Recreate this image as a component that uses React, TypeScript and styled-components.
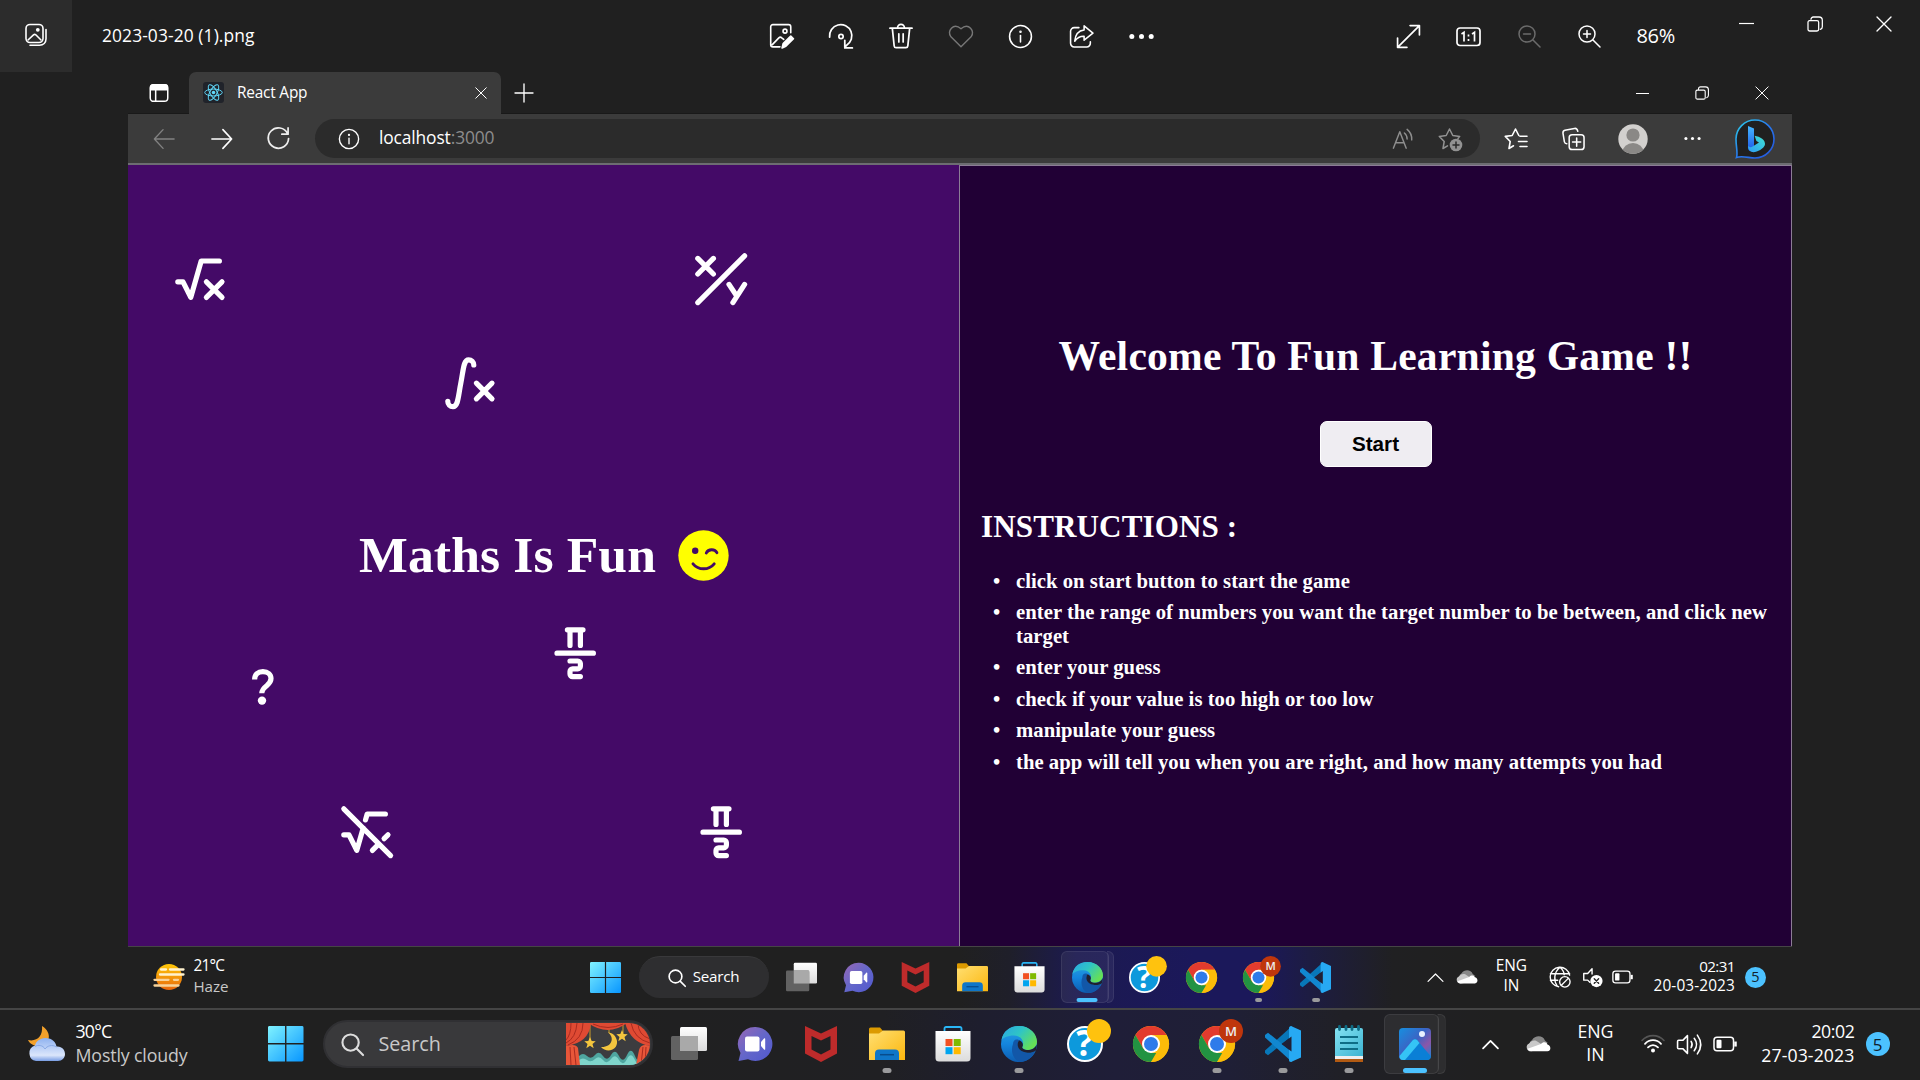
import React from "react";
import styled, { createGlobalStyle, css } from "styled-components";

const Global = createGlobalStyle`
  * { box-sizing: border-box; }
  html, body { margin: 0; padding: 0; background: #202020; }
  body { width: 1920px; height: 1080px; overflow: hidden; }
  svg { display: block; flex: none; overflow: visible; }
`;

const ui = `"Open Sans", "Noto Sans", sans-serif`;
const serif = `"Liberation Serif", "Times New Roman", serif`;

const Screen = styled.div`
  width: 1920px;
  height: 1080px;
  display: flex;
  flex-direction: column;
  background: #202020;
  color: #fff;
  font-family: ${ui};
`;

const Text = styled.span<{ $size: number; $track?: number; $color?: string }>`
  font-size: ${(p) => p.$size}px;
  letter-spacing: ${(p) => p.$track ?? 0}px;
  color: ${(p) => p.$color ?? "#fff"};
  line-height: 1;
  white-space: nowrap;
`;

const Slot = styled.div<{ $w: number; $before?: number }>`
  width: ${(p) => p.$w}px;
  margin-left: ${(p) => p.$before ?? 0}px;
  flex: none;
  display: flex;
  align-items: center;
  justify-content: center;
`;

/* ---------- photo viewer header ---------- */

const ViewerHeader = styled.header`
  height: 72px;
  flex: none;
  display: flex;
`;
const GalleryButton = styled.div`
  width: 72px;
  height: 72px;
  display: flex;
  align-items: center;
  justify-content: center;
  padding-bottom: 2px;
  background: #2c2c2c;
`;
const FileName = styled.div`
  width: 678px;
  padding-left: 30px;
  display: flex;
  align-items: center;
`;
const ViewerTools = styled.div<{ $pad: number }>`
  display: flex;
  align-items: center;
  padding-left: ${(p) => p.$pad}px;
`;
const WindowButtons = styled.div<{ $h: number; $before: number }>`
  display: flex;
  align-items: center;
  height: ${(p) => p.$h}px;
  margin-left: ${(p) => p.$before}px;
`;

/* ---------- photographed desktop ---------- */

const Photo = styled.main`
  width: 1664px;
  height: 936px;
  flex: none;
  margin-left: 128px;
  display: flex;
  flex-direction: column;
`;
const TabStrip = styled.div`
  height: 42px;
  flex: none;
  display: flex;
  align-items: center;
  box-shadow: inset 0 -1px #191919;
`;
const Tab = styled.div`
  width: 312px;
  height: 42px;
  padding: 0 14px 1px;
  display: flex;
  align-items: center;
  gap: 13px;
  background: #3b3b3b;
  border-radius: 7px 7px 0 0;
  > :last-child { margin-left: auto; }
`;
const Favicon = styled.div`
  width: 21px;
  height: 21px;
  border-radius: 3px;
  background: #20232a;
`;
const Toolbar = styled.div`
  height: 51px;
  flex: none;
  display: flex;
  align-items: center;
  padding-left: 7px;
  background: #3b3b3b;
  border-bottom: 2px solid #6d6d72;
`;
const AddressBar = styled.div`
  width: 1165px;
  height: 39px;
  margin-left: 8px;
  padding-left: 23px;
  border-radius: 20px;
  display: flex;
  align-items: center;
  background: #2b2b2b;
`;
const Url = styled.div`
  width: 1000px;
  margin-left: 19px;
  padding-bottom: 1px;
`;

const AppPage = styled.div`
  height: 781px;
  flex: none;
  display: grid;
  grid-template-columns: 831px 833px;
`;
const Playground = styled.section`
  position: relative;
  background: #440a67;
`;
const Floating = styled.div<{ $x: number; $y: number }>`
  position: absolute;
  left: ${(p) => p.$x}px;
  top: ${(p) => p.$y}px;
`;
const MathsTitle = styled.h1`
  margin: 0;
  padding: 360px 0 0 231px;
  display: flex;
  align-items: center;
  gap: 21.5px;
  font: bold 51.7px/60px ${serif};
  letter-spacing: 0.1px;
  white-space: nowrap;
`;
const Panel = styled.section`
  display: flex;
  flex-direction: column;
  align-items: center;
  background: #210035;
  border: 1px solid #8c7c96;
  border-bottom: 0;
  font-family: ${serif};
  font-weight: bold;
`;
const Welcome = styled.h1`
  margin: 165px 0 0;
  font-size: 41.6px;
  line-height: 50px;
  letter-spacing: 0.22px;
  white-space: nowrap;
`;
const StartButton = styled.button`
  width: 112px;
  height: 46px;
  margin-top: 40px;
  padding: 0 0 1px;
  border: 1px solid #fff;
  border-radius: 7px;
  background: #efedf2;
  color: #000;
  font: bold 20.7px "Liberation Sans", Arial, sans-serif;
`;
const Instructions = styled.h2`
  align-self: flex-start;
  margin: 40px 0 0 21px;
  font-size: 31.1px;
  line-height: 40px;
  letter-spacing: 0.1px;
`;
const Steps = styled.ul`
  align-self: stretch;
  margin: 22.5px 0 0;
  padding: 0 14px 0 56px;
  list-style: none;
  font-size: 20.7px;
  line-height: 23.6px;
  letter-spacing: 0.03px;
`;
const Step = styled.li`
  margin-bottom: 8px;
  &::before {
    content: "•";
    display: inline-block;
    width: 23px;
    margin-left: -23px;
  }
`;

/* ---------- taskbars ---------- */

const InnerBar = styled.div`
  height: 62px;
  flex: none;
  display: flex;
  align-items: center;
  padding-bottom: 1px;
  border-top: 1px solid #454545;
  background: linear-gradient(90deg, #202020 50%, #1f1f2a 53%, #1c1a50 57%, #1b185a 64%, #1b185a 68%, #1d1c42 71%, #202022 76%, #202020 80%);
`;
const OuterBar = styled.footer`
  height: 72px;
  flex: none;
  display: flex;
  align-items: center;
  padding-bottom: 2px;
  border-top: 2px solid #454545;
  background: linear-gradient(90deg, #202020 30%, #202023 46%, #1e1e2e 51%, #1f1e38 58%, #1f1f36 64%, #202026 70%, #202020 78%);
`;
const Weather = styled.div<{ $w: number; $pad: number; $gap: number }>`
  width: ${(p) => p.$w}px;
  padding-left: ${(p) => p.$pad}px;
  flex: none;
  display: flex;
  align-items: center;
  gap: ${(p) => p.$gap}px;
`;
const Lines = styled.div<{ $pitch: number; $w?: number; $align?: string }>`
  flex: none;
  display: flex;
  flex-direction: column;
  margin-bottom: 2px;
  width: ${(p) => (p.$w ? `${p.$w}px` : "auto")};
  align-items: ${(p) => p.$align ?? "flex-start"};
  > span { line-height: ${(p) => p.$pitch}px; }
`;
const InnerSearch = styled.div`
  width: 130px;
  height: 42px;
  flex: none;
  margin: 0 4px;
  border-radius: 21px;
  display: flex;
  align-items: center;
  justify-content: center;
  gap: 7px;
  background: #2e2e30;
  border-top: 1px solid #39393b;
  > span { margin-top: -2px; }
`;
const OuterSearch = styled.div`
  width: 330px;
  height: 48px;
  flex: none;
  margin: 0 3px 0 4px;
  padding: 0 1px 0 16px;
  border-radius: 24px;
  display: flex;
  align-items: center;
  gap: 15px;
  background: #39393b;
  border: 2px solid #303033;
  > :last-child { margin-left: auto; }
`;
const Stage = styled.div`
  width: 84px;
  height: 42px;
  overflow: hidden;
  border-radius: 0 21px 21px 0;
`;
const AppSlot = styled.div<{ $w: number; $h: number; $active?: boolean }>`
  position: relative;
  width: ${(p) => p.$w}px;
  height: ${(p) => p.$h}px;
  flex: none;
  display: flex;
  align-items: center;
  justify-content: center;
  ${(p) =>
    p.$active &&
    css`
      &::before, &::after {
        content: "";
        position: absolute;
        top: 0;
        bottom: 0;
        left: ${p.$w * 0.045}px;
        width: ${p.$w * 0.8}px;
        border-radius: 6px;
        background: rgba(255, 255, 255, 0.06);
        border: 1px solid rgba(255, 255, 255, 0.08);
      }
      &::after {
        left: ${p.$w * 0.6}px;
        width: ${p.$w * 0.34}px;
        clip-path: inset(0 0 0 ${p.$w * 0.25}px);
      }
    `}
  > svg { position: relative; }
`;
const Indicator = styled.i<{ $wide?: boolean; $scale: number }>`
  position: absolute;
  z-index: 1;
  bottom: 1px;
  left: 50%;
  width: ${(p) => (p.$wide ? 24 : 9) * p.$scale}px;
  height: ${(p) => 5 * p.$scale}px;
  border-radius: 3px;
  transform: translateX(-50%);
  background: ${(p) => (p.$wide ? "#4cc2ff" : "#9a9a9c")};
`;
const Count = styled.div<{ $d: number; $before: number }>`
  width: ${(p) => p.$d}px;
  height: ${(p) => p.$d}px;
  margin-left: ${(p) => p.$before}px;
  flex: none;
  border-radius: 50%;
  display: flex;
  align-items: center;
  justify-content: center;
  background: #4cc2ff;
`;

/* ---------- drawings ---------- */

type LineProps = { size: number; d?: string; color?: string; w?: number; children?: React.ReactNode; cap?: "round" | "butt" };
const Line = ({ size, d, color = "#fff", w = 1.6, children, cap = "round" }: LineProps) => (
  <svg width={size} height={size} viewBox="0 0 24 24" fill="none" stroke={color} strokeWidth={w} strokeLinecap={cap} strokeLinejoin="round">
    {d && <path d={d} />}
    {children}
  </svg>
);

const math = {
  root: "M19 5h-7l-4 14l-3-6h-2M14 13l6 6M14 19l6-6",
  rootOff: "M14 19l2.5-2.5M18.5 14.5l1.5-1.5M19 5h-7l-.646 2.262M10.448 10.431l-2.448 8.569l-3-6h-2M3 3l18 18",
  integral: "M3 19a2 2 0 0 0 2 2c2 0 2-4 3-9s1-9 3-9a2 2 0 0 1 2 2M14 12l6 6M14 18l6-6",
  divide: "M3 21L21 3M3 4l6 6M3 10l6-6M15 14l3 4.5M21 14l-4.5 7",
  pi: "M9 3h6M10 3v6M14 3v6M5 12h14M10 15h3a1 1 0 0 1 1 1v1a1 1 0 0 1-1 1h-2a1 1 0 0 0-1 1v1a1 1 0 0 0 1 1h3",
};
const floats: [string, number, number][] = [
  [math.root, 41.8, 82.6],
  [math.divide, 562, 82.8],
  [math.integral, 311.8, 186.8],
  [math.pi, 415.9, 456.8],
  [math.rootOff, 208.2, 635.8],
  [math.pi, 561.6, 635.8],
];

const Question = () => (
  <svg width="22" height="36" viewBox="0 0 22 36" fill="none" stroke="#fff" strokeWidth="5.2">
    <path d="M2.6 10.6C2.6 5.3 6 2.6 10.9 2.6c5.100 0 8.100 3 8.100 7 0 3.400-1.700 5-4.300 7.100-3 2.300-4.900 4.100-4.900 7.600" />
    <circle cx="10" cy="31.600" r="4.200" fill="#fff" stroke="none" />
  </svg>
);

const Wink = () => (
  <svg width="51" height="51" viewBox="0 0 51 51" fill="none" stroke="#440a67" strokeWidth="2.900" strokeLinecap="round">
    <circle cx="25.500" cy="25.500" r="25.200" fill="#ff0" stroke="none" />
    <circle cx="17.200" cy="20.700" r="3.200" fill="#440a67" stroke="none" />
    <path d="M28.300 23c1.900-4.300 8.700-4.300 10.600-.3M15 33.800c5.400 6.600 15.800 6.600 21.200 0" />
  </svg>
);

const Gallery = () => (
  <Line size={24} w={1.6}>
    <rect x="2" y="1.500" width="17" height="18" rx="4" />
    <path d="M4 17l5.500-5.200c.8-.7 1.500-.7 2.300 0L17 17M6 22.300h9.500c3.800 0 6.500-2.700 6.500-6.500V6.500" />
    <circle cx="13.800" cy="6.800" r="1.100" fill="#fff" />
  </Line>
);
const Edit = () => (
  <Line size={26} w={1.5}>
    <path d="M11 22H4.500a2 2 0 0 1-2-2V3.500a2 2 0 0 1 2-2H19a2 2 0 0 1 2 2V9M4 20l6-6.300c.9-.9 1.800-.9 2.700 0l1.800 1.500" />
    <circle cx="15.700" cy="7.500" r="1.800" />
    <path d="M13 23l1-4 7-7 2.500 2.500-7 7z" fill="#fff" />
  </Line>
);
const Rotate = () => (
  <Line size={26} w={1.6}>
    <path d="M1.500 13A10.300 10.300 0 1 1 17 20.700L15.500 22.500M15.500 16v7h7" />
    <circle cx="12" cy="12.500" r="2" />
  </Line>
);
const Trash = () => <Line size={26} d="M1.800 4.800h20.400M4 5l1.700 16.200a1.800 1.800 0 0 0 1.800 1.600h9a1.800 1.800 0 0 0 1.800-1.600L20 5M8.800 4.500a3.200 3.200 0 0 1 6.400 0M10 10v7.500M14 10v7.500" w={1.6} />;
const Heart = () => <Line size={26} color="#777" w={1.300} d="M12 22L2.700 12.800C-1.500 7.700 5 -1 12 5.300C19 -1 25.500 7.700 21.300 12.800Z" />;
const Info = ({ size, w = 1.5 }: { size: number; w?: number }) => (
  <Line size={size} w={w}>
    <circle cx="12" cy="12" r="10.500" />
    <path d="M12 11v6.200" />
    <circle cx="12" cy="7.500" r=".5" fill="#fff" />
  </Line>
);
const Share = () => <Line size={25} d="M9.500 3.500H5a3.500 3.500 0 0 0-3.500 3.500v11.500A3.500 3.500 0 0 0 5 22h12a3.500 3.500 0 0 0 3.500-3.500V17M14.500 1.800L23 8.800L14.500 15.500V11.800C10.500 11.600 8 13 5.500 16.500C6 10.500 9 6.300 14.500 5.700Z" w={1.500} />;
const Dots = ({ size, r = 2.400 }: { size: number; r?: number }) => (
  <svg width={size} height={size} viewBox="0 0 24 24" fill="#fff">
    {[2.700, 12, 21.300].map((x) => <circle key={x} cx={x} cy="12" r={r} />)}
  </svg>
);
const Expand = () => <Line size={25} d="M2 22L22 2M13.500 1.500h9v9M1.500 13.500v9h9" w={1.600} />;
const Actual = () => (
  <svg width="25" height="21" viewBox="0 0 25 21" fill="none" stroke="#fff" strokeWidth="1.700">
    <rect x="1" y="2" width="23" height="17.500" rx="3" />
    <path d="M5.500 8l2.500-1.600V15.500M16 8l2.500-1.600V15.500" />
    <path d="M12.500 8.500v2M12.500 13v2" />
  </svg>
);
const Zoom = ({ plus }: { plus?: boolean }) => (
  <Line size={24} color={plus ? "#fff" : "#6b6b6b"} w={1.500}>
    <circle cx="10" cy="10" r="8" />
    <path d={`M16 16l7 7M6.500 10h7${plus ? "M10 6.500v7" : ""}`} />
  </Line>
);
const Minus = ({ size }: { size: number }) => <Line size={size} d="M0 12h24" w={1.900} cap="butt" />;
const Restore = ({ size }: { size: number }) => <Line size={size} w={1.900} d="M3 7h12a2.500 2.500 0 0 1 2.500 2.500V20a2.500 2.500 0 0 1-2.500 2.500H4A2.500 2.500 0 0 1 1.500 20V9.500A2.500 2.500 0 0 1 4 7M6 5C6 3 7.500 1.500 9.500 1.500H18C21 1.500 23 3.500 23 6.500V16c0 2-1.200 3.500-3 4" />;
const Close = ({ size, w = 2 }: { size: number; w?: number }) => <Line size={size} d="M1.500 1.500l21 21M22.500 1.500l-21 21" w={w} />;

const ReactLogo = () => (
  <svg width="21" height="21" viewBox="-12 -12 24 24" fill="none" stroke="#61dafb" strokeWidth="1.100">
    <circle r="2" fill="#61dafb" stroke="none" />
    {[30, 90, 150].map((a) => <ellipse key={a} rx="10" ry="3.900" transform={`rotate(${a - 30})`} />)}
  </svg>
);
const Workspaces = () => (
  <Line size={20} w={1.800}>
    <rect x="1.500" y="2" width="21" height="20" rx="4" />
    <path d="M8 8v14" />
    <path d="M2 8V5a3 3 0 0 1 3-3h14a3 3 0 0 1 3 3v3z" fill="#fff" />
  </Line>
);
const Bing = () => (
  <svg width="40" height="40" viewBox="0 0 40 40">
    <defs>
      <linearGradient id="bg1" x1="0" y1="0" x2="1" y2="1"><stop stopColor="#2bd0e8" /><stop offset=".5" stopColor="#2879ee" /><stop offset="1" stopColor="#2352da" /></linearGradient>
      <linearGradient id="bg2" x1="0" y1="0" x2="0" y2="1"><stop stopColor="#45b8ff" /><stop offset="1" stopColor="#1e56e8" /></linearGradient>
      <linearGradient id="bg3" x1="1" y1="0" x2="0" y2="1"><stop stopColor="#40e3d1" /><stop offset="1" stopColor="#2d9cf5" /></linearGradient>
    </defs>
    <path d="M1.500 38.500C3 34 1 28 1 20a19 19 0 1 1 19 19c-6 0-13-2.500-18.500-.5z" fill="#202020" stroke="url(#bg1)" strokeWidth="1.600" />
    <path d="M13 7l6 2.500V27l-4.500 5c-1-1-1.500-2-1.500-4z" fill="url(#bg2)" />
    <path d="M13 27c1.500 1.500 3 1.500 5 .2l6-3.700-2.600-1.500-1.800-5.300c5.300 1 11.400 3.900 10.300 9.300C28.500 30 21 34 17 33c-2.500-.6-4-3-4-6z" fill="url(#bg3)" />
  </svg>
);
const Avatar = () => (
  <svg width="30" height="30" viewBox="0 0 30 30">
    <defs><clipPath id="av"><circle cx="15" cy="15" r="14.700" /></clipPath></defs>
    <g clipPath="url(#av)"><rect width="30" height="30" fill="#d2d0ce" /><circle cx="15" cy="11" r="6.600" fill="#8a8886" /><ellipse cx="15" cy="28" rx="10.500" ry="9" fill="#8a8886" /></g>
  </svg>
);
const star = "M9.500 18.800L5 21.500L6.200 14.500L1.300 9.400L8.200 8.500L11.500 2L14.800 8.500";

const WinLogo = ({ size }: { size: number }) => (
  <svg width={size} height={size} viewBox="0 0 36 36">
    <defs><linearGradient id="win" gradientUnits="userSpaceOnUse" x1="0" y1="0" x2="36" y2="36"><stop stopColor="#80f3ff" /><stop offset="1" stopColor="#0896ff" /></linearGradient></defs>
    <path fill="url(#win)" d="M1.500 0H17.300V17.300H0V1.500A1.500 1.500 0 0 1 1.500 0zM18.700 0H34.500A1.500 1.500 0 0 1 36 1.500V17.300H18.700zM0 18.700H17.300V36H1.500A1.500 1.500 0 0 1 0 34.500zM18.700 18.700H36V34.500A1.500 1.500 0 0 1 34.500 36H18.700z" />
  </svg>
);

type AppName = "view" | "chat" | "mcafee" | "folder" | "store" | "edge" | "help" | "chrome" | "chromeM" | "code" | "notes" | "photos";

const Chrome = () => (
  <>
    <circle cx="18" cy="18" r="18" fill="#fbbc09" />
    <path d="M2.400 9A18 18 0 0 1 33.600 9H18L10.200 22.500z" fill="#e33b2e" />
    <path d="M2.400 9L10.200 22.500L18 27H25.800L18 36A18 18 0 0 1 2.400 9z" fill="#229342" />
    <path d="M25.800 22.500L18 36A18 18 0 0 0 33.600 9H18z" fill="#fbbc09" />
    <circle cx="18" cy="18" r="9" fill="#fff" />
    <circle cx="18" cy="18" r="7" fill="#2f7bea" />
  </>
);
const appArt: Record<AppName, React.ReactNode> = {
  view: (
    <>
      <rect x="9" y="1" width="27" height="24" rx="1.500" fill="url(#light)" />
      <rect x="0" y="10" width="27" height="24" rx="1.500" fill="#626262" />
      <path d="M9 10h18v15H9z" fill="#a9a9a9" />
    </>
  ),
  chat: (
    <>
      <path d="M18 1a17 17 0 1 1-7 32.300L1.500 35 3.500 27A17 17 0 0 1 18 1z" fill="url(#chat)" />
      <rect x="8" y="10.500" width="14.500" height="15" rx="2" fill="#fff" />
      <path d="M24 16l3-3.500c.6-.6 1.200-.4 1.200.5v10c0 .9-.6 1.100-1.200.5L24 20z" fill="#fff" />
    </>
  ),
  mcafee: <path d="M2 0L18 7.500L34 0V27.500L18 36L2 27.500zM8.500 10V23.500L18 28.500L27.500 23.500V10L18 14.500z" fill="#be2b2b" fillRule="evenodd" />,
  folder: (
    <>
      <path d="M0 3a1.500 1.500 0 0 1 1.500-1.500H11L14 5V12H0z" fill="#dc9a00" />
      <path d="M0 7.500H10L14 4.500H34.500A1.500 1.500 0 0 1 36 6V34H0z" fill="url(#fold)" />
      <path d="M6 34V27.500A4 4 0 0 1 10 23.500H26A4 4 0 0 1 30 27.500V34z" fill="#0f76c8" />
      <path d="M11 28.700h14" stroke="#084c8c" strokeWidth="1.500" />
    </>
  ),
  store: (
    <>
      <path d="M9.500 7V2.500A1.500 1.500 0 0 1 11 1H25A1.500 1.500 0 0 1 26.500 2.500V7" stroke="#29b6f6" strokeWidth="1.800" fill="none" />
      <path d="M.5 5H35.500V32A3.500 3.500 0 0 1 32 35.500H4A3.500 3.500 0 0 1 .5 32z" fill="url(#light)" />
      <path d="M10.500 13H17.500V20H10.500z" fill="#f25022" /><path d="M18.700 13H25.700V20H18.700z" fill="#7fba00" />
      <path d="M10.500 21.200H17.500V28.200H10.500z" fill="#00a4ef" /><path d="M18.700 21.200H25.700V28.200H18.700z" fill="#ffb900" />
    </>
  ),
  edge: (
    <>
      <circle cx="18" cy="18" r="18" fill="url(#edgeBlue)" />
      <path d="M.5 14C2 5 9 0 18 0C29 0 36 8 36 15.500C36 21 31.500 24 27 24C22.500 24 20.500 22 21.500 20.500C23 18 22.500 9.500 13 9.500C6 9.500 2 12 .5 14z" fill="url(#edgeGreen)" />
      <path d="M12 18C12 14.500 14.500 12.500 18 14C15.500 19 17.500 25 25 26.500C29 27.300 32 26 34 25.500C31 32 25 36 18.500 36C13 34 9 26 12 18z" fill="#1257a8" />
      <path d="M18 14.200C22 15.500 22.500 19 21.500 20.500C20.500 22 22.500 24 27 24C30.500 24 34 22.500 35.500 18.500C36 21 35.400 23.500 34.500 25C31 26.800 28 27.100 25 26.500C17 25 15 19 18 14.200z" fill="#202030" />
    </>
  ),
  help: (
    <>
      <circle cx="18" cy="18" r="17" fill="#0d99dc" stroke="#fff" strokeWidth="2" />
      <text x="17.500" y="30" fontFamily="Open Sans, sans-serif" fontWeight="bold" fontSize="35" textAnchor="middle" fill="#fff">?</text>
      <circle cx="32" cy="5" r="12" fill="#ffc20e" />
    </>
  ),
  chrome: <Chrome />,
  chromeM: (
    <>
      <Chrome />
      <circle cx="32" cy="5" r="12" fill="#bf360c" />
      <text x="32" y="9.700" fontFamily="Open Sans, sans-serif" fontSize="13" fontWeight="600" textAnchor="middle" fill="#eee">M</text>
    </>
  ),
  code: (
    <>
      <path d="M27 0L0 24.500V27L3 29.300L27 10z" fill="#0877b9" />
      <path d="M27 36L0 11.500V9L3 6.700L27 26z" fill="#1187d0" />
      <path d="M26 0L36 4.500V31.500L26 36C24.500 36 24 35 24 34V2C24 1 25 0 26 0z" fill="#27a9f3" />
      <path d="M26.500 10.500v15l-10-7.500z" fill="#202036" />
    </>
  ),
  notes: (
    <>
      <path d="M4 30h28v6H4z" fill="#b25a12" /><path d="M4 28h28v5H4z" fill="#eee" />
      <path d="M4 4a2 2 0 0 1 2-2H30a2 2 0 0 1 2 2V30H4z" fill="url(#note)" />
      <path d="M8.500.5v3M15 .5v3M21 .5v3M27.500.5v3" stroke="#0e6d86" strokeWidth="2.800" strokeLinecap="round" />
      <path d="M9 11h18M9 17h18M9 23h18" stroke="#0e6d86" strokeWidth="1.800" />
    </>
  ),
  photos: (
    <>
      <rect x="2" y="2" width="32" height="32" rx="4" fill="url(#pic)" />
      <path d="M2.500 31L15.500 14.500Q18 12 20.500 14.500L33.500 30V31Q33 34 30 34H6Q3 34 2.500 31z" fill="#0a7fd6" />
      <path d="M2.500 30L15.500 14.500Q18 12 20.500 14.500L22.500 17L8 34H6Q2.500 34 2.500 30z" fill="#35c4f5" />
      <circle cx="25" cy="8" r="3" fill="#e8f1ff" />
    </>
  ),
};
const Art = ({ name, size }: { name: AppName; size: number }) => (
  <svg width={size} height={size} viewBox="0 0 36 36">{appArt[name]}</svg>
);
const Gradients = () => (
  <svg width="0" height="0">
    <defs>
      <linearGradient id="light" x1="0" y1="0" x2="0" y2="1"><stop stopColor="#fff" /><stop offset="1" stopColor="#dcdcdc" /></linearGradient>
      <linearGradient id="chat" x1="0" y1="0" x2="1" y2="1"><stop stopColor="#9767b5" /><stop offset=".5" stopColor="#6467c9" /><stop offset="1" stopColor="#5058cf" /></linearGradient>
      <linearGradient id="fold" x1="0" y1="0" x2="1" y2="1"><stop stopColor="#ffdf72" /><stop offset="1" stopColor="#fcb70e" /></linearGradient>
      <linearGradient id="edgeBlue" x1="0" y1="0" x2="0" y2="1"><stop stopColor="#2aa6e0" /><stop offset=".5" stopColor="#1485dd" /><stop offset="1" stopColor="#0d5cb0" /></linearGradient>
      <linearGradient id="edgeGreen" x1="0" y1="0" x2="1" y2=".6"><stop stopColor="#2aa5e5" /><stop offset=".5" stopColor="#2fc5c5" /><stop offset="1" stopColor="#66e055" /></linearGradient>
      <linearGradient id="note" x1="0" y1="0" x2="1" y2="1"><stop stopColor="#85e2f2" /><stop offset="1" stopColor="#3cb4d2" /></linearGradient>
      <linearGradient id="pic" x1="0" y1="0" x2="1" y2="1"><stop stopColor="#168fe0" /><stop offset=".45" stopColor="#3b64c4" /><stop offset=".7" stopColor="#8c56a8" /><stop offset="1" stopColor="#1089dd" /></linearGradient>
      <linearGradient id="sun" x1="0" y1="0" x2="0" y2="1"><stop stopColor="#ffc808" /><stop offset="1" stopColor="#e8660c" /></linearGradient>
      <linearGradient id="cl" x1="0" y1="0" x2="0" y2="1"><stop stopColor="#8fb2f0" /><stop offset=".75" stopColor="#dbe6fb" /><stop offset="1" stopColor="#789de4" /></linearGradient>
    </defs>
  </svg>
);

const Haze = () => (
  <svg width="32" height="28" viewBox="0 0 32 28" fill="none" strokeWidth="2.300" strokeLinecap="round">
    <circle cx="16" cy="14" r="13" fill="url(#sun)" />
    <path d="M8 6.500h5M17 6.500h13.500M7 11.500h23.500" stroke="#fff2cf" />
    <path d="M1.500 16.800h14M21 16.800h4M1.500 22.500h24" stroke="#f8d39a" />
  </svg>
);
const Cloudy = () => (
  <svg width="37" height="36" viewBox="0 0 37 36">
    <path d="M14 0C25 7 22 19 11 20C6 20 2 18 0 14C9 16 15 10 14 0z" fill="#f3a12b" />
    <path d="M8 35A8 8 0 0 1 7 19.500C8 15 12 12.500 17 12C25 12 28 17 28.500 20.500C34 20 37 24 37 28C37 32 34 35 30 35z" fill="url(#cl)" />
    <path d="M7 20.500C10 18.500 15 19 17 23C19 20 24 18 28.500 21" stroke="#88a9e6" strokeWidth="1" fill="none" />
  </svg>
);
const Curtain = () => (
  <svg width="84" height="42" viewBox="0 0 84 42">
    <path fill="#3c3c3f" d="M0 0h84v42H0z" />
    <path d="M13 33q4-4 8 0t8-1t8 1t8-1t8 1t8-1t8 1t8-1V42H13z" fill="#4fa6a0" />
    <path d="M13 37q4-3 8 0t8-1t8 1t8-1t8 1t8-1t8 1t8-1V42H13z" fill="#7fd5cb" />
    <path d="M24 0v17M43 0v10M57 0v10" stroke="#c79a2d" strokeWidth="1" />
    <path d="M42 9.500c7 5 4 15-7 14.500c5 6 17 4 16-6c-1-5-4-8-9-8.500z" fill="#f4c53e" />
    <path d="M24 14l1.700 4 4 .2-3.200 2.700 1.200 4.300-3.700-2.500-3.700 2.500 1.200-4.300-3.200-2.700 4-.2zM56 7l1.700 4 4 .2-3.200 2.700 1.200 4.300-3.700-2.500-3.700 2.500 1.200-4.300-3.200-2.700 4-.2z" fill="#f4c53e" />
    <path d="M22 0Q42 14 61 0z" fill="#df4a33" />
    <path d="M27 1Q42 8 57 1" stroke="#a82b20" fill="none" />
    <path d="M0 0H25Q23 20 0 23z" fill="#df4a33" />
    <path d="M59 0H84V23Q65 20 59 0z" fill="#df4a33" />
    <path d="M0 23Q10 20 12 25L14 42H0zM84 23Q75 20 73 27L70 42H84z" fill="#e85639" />
    <path d="M5 0Q5 12 0 17M11 0Q10 15 0 20M17 0Q17 16 2 22M65 0Q68 16 84 20M72 0Q72 12 84 16M79 0Q79 7 84 11M4 24L5 42M8 24L10 42M80 24L79 42M77 24L75 42" stroke="#a82b20" strokeWidth="1" fill="none" />
  </svg>
);

const Magnifier = ({ size, color }: { size: number; color?: string }) => <Line size={size} color={color} w={2.200}><circle cx="10" cy="10" r="8.500" /><path d="M16.500 16.500l6.500 6.500" /></Line>;
const Chevron = ({ w }: { w: number }) => <Line size={17} d="M1.500 17.500L12 7L22.500 17.500" w={w} />;
const Cloud = ({ w }: { w: number }) => (
  <svg width={w} height={w * 0.66} viewBox="0 0 24 16">
    <path d="M4 12A5 5 0 0 1 5 4C8-1 16-1 18 4.500L21 7z" fill="#888" />
    <path d="M4 15.500A4.200 4.200 0 0 1 2 7.500C5 3.500 9 4 11 6L22 13z" fill="#c9c9c9" />
    <path d="M4 15.500C2 15.500 1 14.500.5 13L14 8C16 5.500 20 6 20.500 8.500C24 9 25 15 20.500 15.500z" fill="#fff" />
  </svg>
);
const GlobeOff = () => (
  <Line size={22} w={1.500}>
    <path d="M22.500 10A10.700 10.700 0 1 0 10.500 22.600M1.500 8.500h21M1.500 15.500h8M9 22C5 16 5 7 12 1.300C15 4 16.500 7 16.500 9.500" />
    <circle cx="17.300" cy="17.300" r="5.700" /><path d="M13.500 21l7.500-7.500" />
  </Line>
);
const Muted = () => (
  <Line size={21} w={1.600}>
    <path d="M11.500 8V2L6.500 7.500H2V15h4.500L9 17.500" /><circle cx="16.500" cy="16" r="7" fill="#fff" stroke="none" /><path d="M14 13.500l5 5M19 13.500l-5 5" stroke="#222" />
  </Line>
);
const Battery = ({ w }: { w: number }) => (
  <svg width={w} height={w * 0.67} viewBox="0 0 24 16" fill="none" stroke="#fff" strokeWidth="1.500">
    <rect x="1" y="1.200" width="19.500" height="13.500" rx="3" /><rect x="3.500" y="3.800" width="5" height="8.300" rx="1" fill="#fff" stroke="none" /><path d="M22.500 5.500v5" strokeWidth="2.500" />
  </svg>
);
const Wifi = () => (
  <Line size={24} w={1.600}>
    <path d="M1 8.500C7 2 17 2 23 8.500" stroke="#555" />
    <path d="M4 11.800C8.500 7 15.500 7 20 11.800M7 15.300C10 12.300 14 12.300 17 15.300" strokeWidth="1.800" />
    <circle cx="12" cy="18.500" r="2" fill="#fff" stroke="none" />
  </Line>
);
const Sound = () => <Line size={25} d="M11 3.500L6.500 8H2.500Q1.500 8 1.500 9v6q0 1 1 1h4l4.500 4.500zM14.500 9q2 3 0 6M17.500 6q4.500 6 0 12M20.500 3q6.500 9 0 18" w={1.500} />;

const innerApps: AppName[] = ["view", "chat", "mcafee", "folder", "store", "edge", "help", "chrome", "chromeM", "code"];
const outerApps: AppName[] = [...innerApps, "notes", "photos"];
const outerRunning: AppName[] = ["folder", "edge", "chromeM", "code", "notes"];
const steps = [
  "click on start button to start the game",
  "enter the range of numbers you want the target number to be between, and click new target",
  "enter your guess",
  "check if your value is too high or too low",
  "manipulate your guess",
  "the app will tell you when you are right, and how many attempts you had",
];

export default function App() {
  return (
    <Screen>
      <Global />
      <ViewerHeader>
        <GalleryButton><Gallery /></GalleryButton>
        <FileName><Text $size={17.4} $track={0.1}>2023-03-20 (1).png</Text></FileName>
        <ViewerTools $pad={0.5}>
          {[<Edit />, <Rotate />, <Trash />, <Heart />, <Info size={25} />, <Share />, <Dots size={25} />].map((icon, i) => <Slot key={i} $w={60.1}>{icon}</Slot>)}
        </ViewerTools>
        <ViewerTools $pad={207.5}>
          {[<Expand />, <Actual />, <Zoom />, <Zoom plus />].map((icon, i) => <Slot key={i} $w={60}>{icon}</Slot>)}
          <Slot $w={74}><Text $size={20} $track={-0.3}>86%</Text></Slot>
        </ViewerTools>
        <WindowButtons $h={47} $before={19}>
          <Slot $w={69}><Minus size={15} /></Slot>
          <Slot $w={69}><Restore size={16} /></Slot>
          <Slot $w={69}><Close size={16} /></Slot>
        </WindowButtons>
      </ViewerHeader>

      <Photo>
        <TabStrip>
          <Slot $w={61}><Workspaces /></Slot>
          <Tab>
            <Favicon><ReactLogo /></Favicon>
            <Text $size={15.4} $track={-0.2}>React App</Text>
            <Close size={12} />
          </Tab>
          <Slot $w={45}><Line size={18} d="M12 0v24M0 12h24" w={1.8} /></Slot>
          <WindowButtons $h={41} $before={1066}>
            <Slot $w={60}><Minus size={13} /></Slot>
            <Slot $w={60}><Restore size={14} /></Slot>
            <Slot $w={60}><Close size={14} w={1.7} /></Slot>
          </WindowButtons>
        </TabStrip>
        <Toolbar>
          <Slot $w={58}><Line size={22} color="#828282" d="M23 12H1.500M11 1.800L1.500 12L11 22.200" w={1.5} /></Slot>
          <Slot $w={57}><Line size={22} d="M1 12H22.500M13 1.800L22.500 12L13 22.200" w={1.8} /></Slot>
          <Slot $w={57}><Line size={23} color="#eee" d="M21.500 7A10.600 10.600 0 1 0 22.500 12M22 1v6.500h-6.500" w={1.8} /></Slot>
          <AddressBar>
            <Info size={22} />
            <Url><Text $size={17.4} $track={-0.13}>localhost</Text><Text $size={17.4} $track={-0.13} $color="#8d8d8d">:3000</Text></Url>
            <Slot $w={47}>
              <Line size={22} color="#8e8e8e" w={1.6} d="M1.500 22L8.500 4L15.500 22M4 16h9M13.500 5.500Q16.500 8 16.500 12M16.500 1.500Q22 6 21.500 13" />
            </Slot>
            <Slot $w={48}>
              <Line size={24} color="#929292" w={1.5}>
                <path d={star + "L21.700 9.400L20 11.500"} /><circle cx="18" cy="18" r="6.300" fill="#929292" stroke="none" /><path d="M18 15v6M15 18h6" stroke="#2b2b2b" />
              </Line>
            </Slot>
          </AddressBar>
          <Slot $w={57} $before={7.5}><Line size={24} d={star + "M16 9.300h7M14.500 14.500h8.500M16 19.500h7"} w={1.6} /></Slot>
          <Slot $w={57}>
            <Line size={23} w={1.6}><rect x="7.500" y="8" width="15.500" height="15.500" rx="3" /><path d="M15.300 11.500v8.500M11 15.700h8.500M5 17.500Q3 17.500 2.500 15.500L1 6.500Q.8 4 3 3.500L13 1.500Q15.700 1 16.500 4.500" /></Line>
          </Slot>
          <Slot $w={62}><Avatar /></Slot>
          <Slot $w={58}><Dots size={17} r={2.2} /></Slot>
          <Slot $w={67}><Bing /></Slot>
        </Toolbar>

        <AppPage>
          <Playground>
            {floats.map(([d, x, y], i) => <Floating key={i} $x={x} $y={y}><Line size={62.4} d={d} w={2} /></Floating>)}
            <Floating $x={124.3} $y={503.5}><Question /></Floating>
            <MathsTitle>Maths Is Fun<Wink /></MathsTitle>
          </Playground>
          <Panel>
            <Welcome>Welcome To Fun Learning Game !!</Welcome>
            <StartButton>Start</StartButton>
            <Instructions>INSTRUCTIONS :</Instructions>
            <Steps>{steps.map((s) => <Step key={s}>{s}</Step>)}</Steps>
          </Panel>
        </AppPage>

        <InnerBar>
          <Weather $w={448.500} $pad={24.500} $gap={9}>
            <Haze />
            <Lines $pitch={20.5}><Text $size={15.4} $track={-0.8}>21°C</Text><Text $size={15.2} $track={-0.1} $color="#c8c8c8">Haze</Text></Lines>
          </Weather>
          <Slot $w={58}><WinLogo size={31} /></Slot>
          <InnerSearch><Magnifier size={18} /><Text $size={15.2} $track={-0.25}>Search</Text></InnerSearch>
          {innerApps.map((a) => (
            <AppSlot key={a} $w={57.2} $h={52} $active={a === "edge"}>
              <Art name={a} size={31} />
              {a === "edge" && <Indicator $wide $scale={0.87} />}
              {(a === "chromeM" || a === "code") && <Indicator $scale={0.87} />}
            </AppSlot>
          ))}
          <Slot $w={32} $before={75.500}><Chevron w={1.7} /></Slot>
          <Slot $w={31}><Cloud w={21} /></Slot>
          <Slot $w={57}><Lines $pitch={20} $align="center"><Text $size={15.4} $track={-0.1}>ENG</Text><Text $size={15.4}>IN</Text></Lines></Slot>
          <Slot $w={41}><GlobeOff /></Slot>
          <Slot $w={24}><Muted /></Slot>
          <Slot $w={36}><Battery w={21} /></Slot>
          <Lines $pitch={20.5} $w={94} $align="flex-end"><Text $size={15.2} $track={-0.6}>02:31</Text><Text $size={15.4} $track={0.1}>20-03-2023</Text></Lines>
          <Count $d={21} $before={10}><Text $size={14.5} $color="#10202c">5</Text></Count>
        </InnerBar>
      </Photo>

      <OuterBar>
        <Weather $w={252.5} $pad={28} $gap={10.5}>
          <Cloudy />
          <Lines $pitch={24}><Text $size={17.8} $track={-0.8}>30°C</Text><Text $size={17.8} $track={-0.15} $color="#c8c8c8">Mostly cloudy</Text></Lines>
        </Weather>
        <Slot $w={66}><WinLogo size={35.5} /></Slot>
        <OuterSearch>
          <Magnifier size={23} color="#ddd" />
          <Text $size={19.8} $track={-0.05} $color="#c8c8c8">Search</Text>
          <Stage><Curtain /></Stage>
        </OuterSearch>
        {outerApps.map((a) => (
          <AppSlot key={a} $w={66} $h={60} $active={a === "photos"}>
            <Art name={a} size={36} />
            {a === "photos" && <Indicator $wide $scale={1} />}
            {outerRunning.includes(a) && <Indicator $scale={1} />}
          </AppSlot>
        ))}
        <Slot $w={48} $before={19}><Chevron w={2.5} /></Slot>
        <Slot $w={48}><Cloud w={24} /></Slot>
        <Slot $w={66}><Lines $pitch={23} $align="center"><Text $size={17.8} $track={-0.1}>ENG</Text><Text $size={17.8}>IN</Text></Lines></Slot>
        <Slot $w={36} $before={6}><Wifi /></Slot>
        <Slot $w={36}><Sound /></Slot>
        <Slot $w={36}><Battery w={24} /></Slot>
        <Lines $pitch={24} $w={112} $align="flex-end"><Text $size={17.7} $track={-0.4}>20:02</Text><Text $size={17.7} $track={0.1}>27-03-2023</Text></Lines>
        <Count $d={24} $before={11}><Text $size={17} $color="#10202c">5</Text></Count>
      </OuterBar>
      <Gradients />
    </Screen>
  );
}
